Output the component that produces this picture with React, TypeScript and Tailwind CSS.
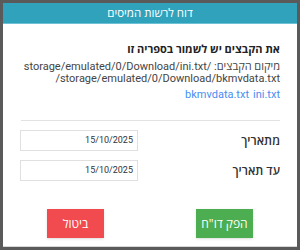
import React from "react";

export default function App() {
  return (
    <div className="w-[300px] h-[250px] bg-[#5a5a5a] p-[3px]" style={{ fontFamily: "Roboto, 'Open Sans', Arial, sans-serif" }}>
      <div dir="rtl" className="w-[294px] h-[244px] bg-white flex flex-col border-b border-[#d8d8d8]">
        <div className="h-[21px] bg-[#31a2bc] border-b border-[#6cc2d4] flex items-center justify-center text-white text-[11.5px]" style={{ fontFamily: "'Open Sans', sans-serif" }}>
          דוח לרשות המיסים
        </div>
        <div className="px-[17px] pt-[19px] flex flex-col">
          <div className="text-[11px] font-bold text-[#222] leading-[14px]">את הקבצים יש לשמור בספריה זו</div>
          <div className="text-[11px] text-[#444] leading-[12px] mt-[4px]">
            מיקום הקבצים: /storage/emulated/0/Download/ini.txt
            <br />
            storage/emulated/0/Download/bkmvdata.txt/
          </div>
          <div className="text-[11px] text-[#4a8df0] leading-[12px] mt-[4px] flex gap-[4px]">
            <span>ini.txt</span>
            <span>bkmvdata.txt</span>
          </div>
          <div className="h-px bg-[#e2e2e2] mt-[19px] ml-[1px]" />
          <div className="flex items-center justify-between mt-[9px]">
            <span className="text-[12px] font-semibold text-[#333]">מתאריך</span>
            <div className="w-[118px] h-[21px] border border-[#e0e0e0] flex items-center justify-start px-[4px] text-[9px] text-[#333]">
              15/10/2025
            </div>
          </div>
          <div className="flex items-center justify-between mt-[9px]">
            <span className="text-[12px] font-semibold text-[#333]">עד תאריך</span>
            <div className="w-[118px] h-[21px] border border-[#e0e0e0] flex items-center justify-start px-[4px] text-[9px] text-[#333]">
              15/10/2025
            </div>
          </div>
          <div className="flex justify-between mt-[28px] px-[27px]">
            <button className="w-[57px] h-[29px] bg-[#4cae50] text-white text-[12px] shadow-sm" style={{ fontFamily: "'Open Sans', sans-serif" }}>הפק דו"ח</button>
            <button className="w-[57px] h-[29px] bg-[#f14b4f] text-white text-[12px] shadow-sm" style={{ fontFamily: "'Open Sans', sans-serif" }}>ביטול</button>
          </div>
        </div>
      </div>
    </div>
  );
}
